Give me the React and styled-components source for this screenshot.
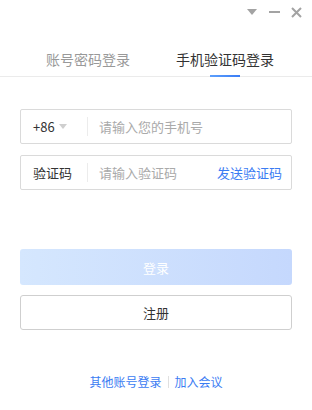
import React from 'react'
import styled, { createGlobalStyle } from 'styled-components'

const Global = createGlobalStyle`
  html, body { margin: 0; padding: 0; background: #fff; }
  body { font-family: "Noto Sans CJK SC", "Noto Sans", sans-serif; }
`

const Window = styled.div`
  width: 312px;
  height: 410px;
  display: flex;
  flex-direction: column;
  background: #fff;
  overflow: hidden;
`

const TitleBar = styled.div`
  height: 24px;
  display: flex;
  justify-content: flex-end;
  align-items: center;
  padding-right: 8px;
  gap: 6px;
`

const IconBtn = styled.div`
  width: 16px;
  height: 16px;
  display: flex;
  align-items: center;
  justify-content: center;
`

const Tabs = styled.div`
  margin-top: 21px;
  height: 31px;
  display: flex;
  padding-left: 46px;
  gap: 46px;
  border-bottom: 1px solid #ebebeb;
`

const Tab = styled.div`
  position: relative;
  font-size: 14px;
  line-height: 28px;
  color: ${p => (p.active ? '#333' : '#999')};
  &::after {
    content: '';
    display: ${p => (p.active ? 'block' : 'none')};
    position: absolute;
    left: 50%;
    bottom: -1px;
    width: 30px;
    height: 2px;
    transform: translateX(-50%);
    background: linear-gradient(90deg, #5da0fc, #3a7cf5);
  }
`

const Form = styled.div`
  padding: 32px 20px 0;
  display: flex;
  flex-direction: column;
  gap: 11px;
`

const Field = styled.div`
  height: 33px;
  border: 1px solid #dadada;
  border-radius: 2px;
  display: flex;
  align-items: center;
  font-size: 13px;
`

const Prefix = styled.div`
  width: 54px;
  padding-left: 12px;
  display: flex;
  align-items: center;
  gap: 4px;
  color: #333;
`

const Sep = styled.div`
  width: 1px;
  height: 19px;
  background: #ececec;
`

const Placeholder = styled.div`
  flex: 1;
  padding-left: 11px;
  color: #aaa;
`

const SendLink = styled.div`
  color: #3b7cf3;
  padding-right: 9px;
`

const Buttons = styled.div`
  padding: 59px 20px 0;
  display: flex;
  flex-direction: column;
  gap: 10px;
`

const Button = styled.div`
  height: ${p => (p.primary ? '36px' : '33px')};
  border-radius: 3px;
  display: flex;
  align-items: center;
  justify-content: center;
  font-size: 13px;
  color: ${p => (p.primary ? '#fff' : '#333')};
  background: ${p => (p.primary ? 'linear-gradient(90deg, #d5e7fe, #c5d8fd)' : '#fff')};
  border: ${p => (p.primary ? 'none' : '1px solid #cfcfcf')};
`

const Footer = styled.div`
  margin-top: 43px;
  display: flex;
  justify-content: center;
  align-items: center;
  gap: 6px;
  font-size: 12px;
  color: #3b7cf3;
`

const FootSep = styled.div`
  width: 1px;
  height: 12px;
  background: #e0e0e0;
`

export default function App() {
  return (
    <Window>
      <Global />
      <TitleBar>
        <IconBtn>
          <svg width="10" height="6" viewBox="0 0 10 6"><path d="M0 0h10L5 6z" fill="#a3a3a3" /></svg>
        </IconBtn>
        <IconBtn>
          <svg width="11" height="2" viewBox="0 0 11 2"><rect width="11" height="2" fill="#a3a3a3" /></svg>
        </IconBtn>
        <IconBtn>
          <svg width="11" height="11" viewBox="0 0 11 11"><path d="M1 1l9 9M10 1l-9 9" stroke="#a3a3a3" strokeWidth="2" /></svg>
        </IconBtn>
      </TitleBar>
      <Tabs>
        <Tab>账号密码登录</Tab>
        <Tab active>手机验证码登录</Tab>
      </Tabs>
      <Form>
        <Field>
          <Prefix>
            +86
            <svg width="8" height="5" viewBox="0 0 8 5"><path d="M0 0h8L4 5z" fill="#cfcfcf" /></svg>
          </Prefix>
          <Sep />
          <Placeholder>请输入您的手机号</Placeholder>
        </Field>
        <Field>
          <Prefix>验证码</Prefix>
          <Sep />
          <Placeholder>请输入验证码</Placeholder>
          <SendLink>发送验证码</SendLink>
        </Field>
      </Form>
      <Buttons>
        <Button primary>登录</Button>
        <Button>注册</Button>
      </Buttons>
      <Footer>
        <span>其他账号登录</span>
        <FootSep />
        <span>加入会议</span>
      </Footer>
    </Window>
  )
}
